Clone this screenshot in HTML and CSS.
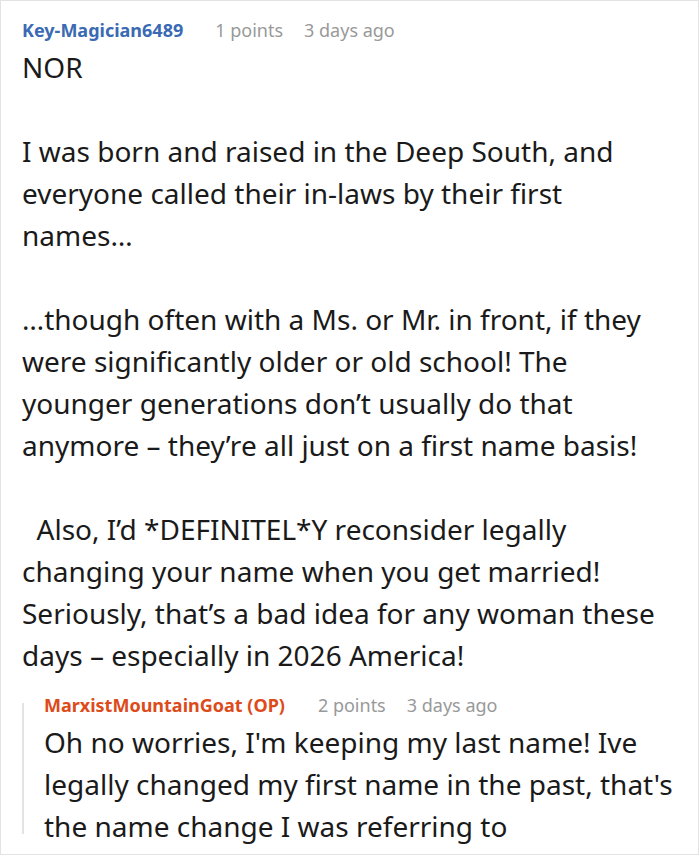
FILE: index.html
```html
<!DOCTYPE html>
<html>
<head>
<meta charset="utf-8">
<link rel="stylesheet" href="styles.css">
</head>
<body>
<div class="frame">
  <div class="comment">
    <div class="meta">
      <span class="author">Key-Magician6489</span>
      <span class="points">1 points</span>
      <span class="time">3 days ago</span>
    </div>
    <div class="body">
      <p>NOR</p>
      <p>I was born and raised in the Deep South, and everyone called their in-laws by their first names…</p>
      <p>…though often with a Ms. or Mr. in front, if they were significantly older or old school! The younger generations don’t usually do that anymore – they’re all just on a first name basis!</p>
      <p>&nbsp; Also, I’d *DEFINITEL*Y reconsider legally changing your name when you get married! Seriously, that’s a bad idea for any woman these days – especially in 2026 America!</p>
    </div>
    <div class="reply">
      <div class="thread-line"></div>
      <div class="reply-content">
        <div class="meta">
          <span class="author op">MarxistMountainGoat (OP)</span>
          <span class="points">2 points</span>
          <span class="time">3 days ago</span>
        </div>
        <div class="body">
          <p>Oh no worries, I'm keeping my last name! Ive legally changed my first name in the past, that's the name change I was referring to</p>
        </div>
      </div>
    </div>
  </div>
</div>
</body>
</html>
```
FILE: styles.css
```css
html, body {
  margin: 0;
  padding: 0;
  background: #ffffff;
}
.frame {
  box-sizing: border-box;
  width: 699px;
  height: 855px;
  border: 1px solid #e3e3e3;
  overflow: hidden;
  font-family: "Noto Sans", "Open Sans", sans-serif;
}
.comment {
  padding: 17px 22px 0 21px;
}
.meta {
  display: flex;
  align-items: baseline;
  font-size: 18px;
  line-height: 24px;
  color: #999999;
}
.author {
  font-weight: 700;
  color: #3a6ab3;
  margin-right: 32px;
}
.author.op {
  color: #dd4b1a;
  margin-right: 33px;
}
.points {
  margin-right: 21px;
}
.body {
  margin-top: 4px;
  font-size: 28px;
  line-height: 42px;
  color: #1a1a1a;
}
.body p {
  margin: 0 0 42px 0;
}
.body p:last-child {
  margin-bottom: 0;
}
.reply {
  display: flex;
  margin-top: 17px;
}
.thread-line {
  flex: none;
  width: 2px;
  margin: 10px 20px 13px 0;
  background: #e3e3e3;
}
.reply-content {
  flex: 1;
  min-width: 0;
}
```
